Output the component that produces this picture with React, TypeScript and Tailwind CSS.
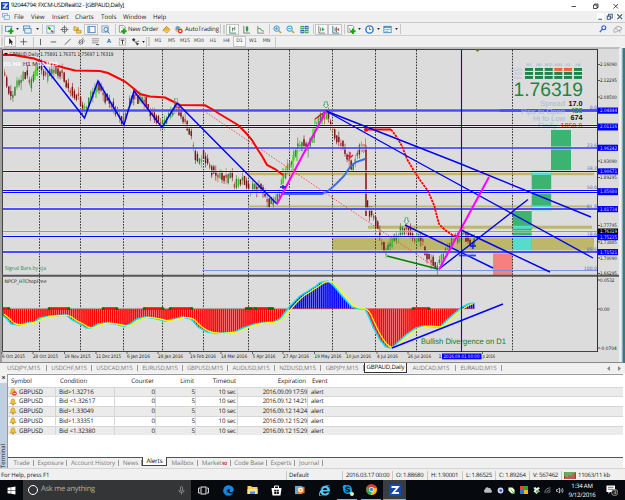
import { FaChrome, FaCloud, FaEdge, FaInternetExplorer, FaSkype, FaWindows } from "react-icons/fa";
import type { ReactNode } from "react";

type Point = [number, number];

const toPoints = (list: Point[]) => list.map((p) => p.join(",")).join(" ");

const valueAt = (list: Point[], x: number) => {
  for (let i = 1; i < list.length; i++) {
    const [x0, y0] = list[i - 1];
    const [x1, y1] = list[i];
    if (x <= x1) return x1 === x0 ? y1 : y0 + ((y1 - y0) * (x - x0)) / (x1 - x0);
  }
  return list[list.length - 1][1];
};

const price: Point[] = [
  [3, 73], [6, 82], [10, 95], [12, 97], [15, 87], [20, 80], [26, 73], [29, 83], [32, 82], [36, 68],
  [40, 64], [44, 74], [48, 76], [53, 70], [57, 72], [62, 73], [66, 83], [70, 92], [75, 96], [78, 96],
  [82, 107], [85, 112], [89, 97], [94, 92], [98, 85], [103, 95], [108, 100], [114, 109], [119, 117],
  [123, 122], [128, 106], [134, 93], [138, 100], [144, 100], [150, 113], [154, 115], [158, 120],
  [162, 127], [167, 118], [172, 110], [177, 106], [182, 118], [188, 129], [190, 132], [193, 149],
  [196, 158], [199, 161], [203, 155], [208, 165], [212, 171], [218, 175], [222, 176], [228, 178],
  [232, 175], [234, 187], [240, 180], [245, 180], [250, 192], [254, 188], [262, 188], [266, 200],
  [272, 202], [276, 200], [279, 192], [282, 178], [286, 170], [291, 161], [297, 148], [303, 144],
  [308, 148], [313, 135], [318, 120], [323, 117], [328, 115], [332, 130], [338, 140], [344, 150],
  [350, 165], [354, 165], [358, 148], [365, 148], [367, 210], [370, 213], [375, 220], [379, 232],
  [382, 245], [386, 252], [391, 242], [396, 237], [400, 232], [405, 228], [410, 234], [415, 240],
  [421, 236], [424, 250], [430, 260], [436, 268], [440, 260], [446, 250], [452, 240], [458, 238],
  [463, 232], [468, 240], [472, 246], [475, 235],
];

const slowAverage: Point[] = [
  [3, 55], [14, 55], [22, 56.5], [34, 58.5], [40, 61], [50, 64], [58, 66], [65, 68], [75, 70.5],
  [100, 71], [108, 73], [116, 77], [125, 81.5], [133, 88], [140, 94], [150, 96.5], [165, 97.5],
  [172, 101], [180, 105], [205, 105.3], [212, 109], [218, 113], [228, 119], [238, 125], [246, 133],
  [252, 140], [258, 150], [262, 156], [267, 165], [275, 169], [283, 175],
];

const fastAverage: Point[] = [
  [365, 129.5], [391, 129.5], [396, 136], [402, 146], [407, 159], [414, 171], [420, 180], [428, 191],
  [434, 205], [439, 224], [445, 230], [452, 235], [460, 237],
];

const support: Point[] = [
  [281, 194], [322, 194], [328, 191], [336, 184], [344, 176], [350, 167], [356, 162], [365, 159],
];

const zigzag: Point[] = [
  [40, 61], [84.5, 118], [98, 81], [124, 125], [134, 91], [162, 127.5], [177, 103], [277, 204],
];

const oscillator: Point[] = [
  [3, 316], [7, 319], [11, 324], [20, 325], [27, 323], [34, 322], [40, 318], [50, 316], [66, 315],
  [72, 320], [80, 324], [86, 328], [91, 328], [98, 324], [106, 323], [115, 324], [125, 326.5],
  [130, 324], [137, 319], [145, 317], [155, 318.5], [165, 321], [175, 319], [182, 317], [191, 319],
  [198, 327], [207, 332], [218, 333.5], [235, 332], [243, 328], [255, 324], [266, 322.5], [274, 322],
  [280, 319], [287, 310], [290, 306], [300, 296], [308, 291], [316, 286], [320, 282.5], [328, 281],
  [334, 286], [343, 297], [352, 307], [358, 308.5], [365, 309], [368, 315], [373, 327], [380, 340],
  [386, 347], [392, 348], [398, 342], [407, 334], [416, 328], [424, 326], [440, 327], [447, 320],
  [455, 313], [462, 307], [468, 304], [474, 303],
];

const ZERO = 309;
const bars = Array.from({ length: 230 }, (_, i) => 4 + i * 2.05);
const signal: Point[] = bars.map((x) => [
  x,
  (valueAt(oscillator, x - 1) + valueAt(oscillator, x - 3) + valueAt(oscillator, x - 6)) / 3,
]);

const verticals = [39.5, 80.5, 123.5, 162.5, 203.5, 248.5, 289.5, 332.5, 375.5, 416.5, 512.5];

const levels = [
  { y: 110.5, w: 2.4, color: "#4a4aff" },
  { y: 125.5, w: 1, color: "#0000ff" },
  { y: 127.5, w: 1, color: "#0000ff" },
  { y: 148, w: 1.5, color: "#3333ff" },
  { y: 171.5, w: 1, color: "#0000ff" },
  { y: 190.5, w: 1, color: "#0000ff" },
  { y: 192.5, w: 1, color: "#0000ff" },
  { y: 209, w: 2, color: "#5050fa" },
  { y: 231.5, w: 0.9, color: "#8d9d45" },
  { y: 236.5, w: 1, color: "#0000ff" },
  { y: 251.9, w: 2, color: "#4a4aff" },
];

const axis: [string, number][] = [
  ["2.16090", 64.5], ["2.12295", 80.5], ["2.08500", 97], ["1.93090", 161],
  ["1.89295", 177.5], ["1.77795", 225.5], ["1.73885", 242], ["1.70090", 258], ["1.66295", 273.5],
  ["0.0532", 280], ["0.00", 309], ["-0.0704", 348],
];

const axisTags: [string, number][] = [
  ["2.04844", 110.5], ["2.01116", 126.5], ["1.96242", 147.7], ["1.90671", 171.3],
  ["1.85680", 191.2], ["1.81734", 209], ["1.75235", 237], ["1.71521", 252],
];

const fibs: [string, number][] = [
  ["0.0", 109], ["23.6", 147], ["38.2", 170], ["50.0", 189], ["61.8", 208], ["78.6", 235.5],
  ["88.6", 250.5], ["100.0", 269.5],
];

const dates: [string, number, number][] = [
  ["6 Oct 2015", 2, 23], ["28 Oct 2015", 33, 25], ["19 Nov 2015", 64.5, 26], ["11 Dec 2015", 96, 25],
  ["6 Jan 2016", 127, 23], ["28 Jan 2016", 158, 25], ["19 Feb 2016", 190, 26], ["14 Mar 2016", 221, 26],
  ["5 Apr 2016", 252.5, 23], ["27 Apr 2016", 283, 26], ["19 May 2016", 314.5, 27],
  ["10 Jun 2016", 346, 25], ["4 Jul 2016", 377, 21], ["26 Jul 2016", 408, 23], ["p 2016", 482.5, 12.5],
];

const markers: Point[] = [[3, 9], [49, 69], [103, 117], [144, 163], [170, 192], [246, 273], [413, 429]];

const panelColumns: [string, number][] = [
  ["M1", 525], ["M5", 535], ["M15", 544.7], ["M30", 554.3], ["H1", 564], ["H4", 574],
];

function Candles() {
  return (
    <g>
      {bars.map((x, i) => {
        const y = valueAt(price, x);
        const next = valueAt(price, x + 2);
        const noise = ((i * 37) % 11) - 5;
        const up = next + noise * 0.3 < y;
        const body = 1.5 + ((i * 7) % 4);
        const wick = 3.5 + ((i * 13) % 5);
        const color = up ? (i % 3 === 0 ? "#44b62d" : "#3c7f3a") : i % 4 === 0 ? "#b4503c" : "#7d1414";
        return (
          <g key={i} fill={color}>
            <rect x={x + 0.4} y={y - wick + noise * 0.6} width="0.6" height={wick * 2} />
            <rect x={x} y={y - body + noise * 0.4} width="1.4" height={body * 2} />
          </g>
        );
      })}
      <path d="M36 76V66M35 80V71M96 98V88" stroke="#33e011" strokeWidth="1.3" />
      <path d="M283 184V168M286 173V166M293 172V155M297 161V147M313 143V128M315 134V119M322 126V116M327 120V113" stroke="#33e011" strokeWidth="1.2" />
      <path d="M366 146V216" stroke="#8b1c1c" strokeWidth="1.6" />
      <path d="M361 144h4v8h-4z" fill="#cc9999" />
    </g>
  );
}

function Arrow({ x, y }: { x: number; y: number }) {
  return (
    <path
      transform={`translate(${x} ${y})`}
      d="M-1.3 -3.2H1.3V0H2.7L0 3L-2.7 0H-1.3Z"
      fill="#e8eee8"
      stroke="#2e8b57"
      strokeWidth="0.7"
    />
  );
}

function Chart() {
  return (
    <svg viewBox="0 47 625 316" className="block h-[316px] w-[625px]" fill="none">
      <rect x="0" y="47" width="625" height="316" fill="#f0f0f0" />
      <path d="M0 48H619V362H0" fill="#dcdcdc" />
      <path d="M0 48H620" stroke="#b0b0b0" strokeWidth="1.4" />
      <path d="M1 48V362" stroke="#858585" strokeWidth="1.4" />
      <path d="M597.5 49.5H2.5V351.5H597.5" stroke="#444" />
      <rect x="619" y="48" width="2" height="315" fill="#efefef" />
      <rect x="621" y="48" width="1.5" height="315" fill="#b9e4f3" />
      <rect x="622.5" y="48" width="2.5" height="315" fill="#43747c" />

      <g fill="#bdb76b">
        <rect x="249" y="172.2" width="345" height="3" />
        <rect x="249" y="205.5" width="342" height="2.8" />
        <rect x="368" y="225.7" width="224" height="3" />
        <rect x="332.5" y="237" width="261.5" height="14.5" />
      </g>

      <g fill="#3cb371">
        <rect x="551" y="130" width="20" height="40.5" />
        <rect x="531.7" y="170.5" width="19.5" height="40.5" />
        <rect x="512.7" y="211" width="19" height="41" />
      </g>
      <g fill="#57dccb">
        <rect x="531.7" y="172" width="19.5" height="3" />
        <rect x="531.7" y="205.5" width="19.5" height="5.5" />
        <rect x="512.7" y="225.7" width="19" height="3" />
        <rect x="512.7" y="237" width="19" height="15" />
      </g>
      <rect x="493" y="252.5" width="19.5" height="23" fill="#f58080" />

      {verticals.map((x) => (
        <path key={x} d={`M${x} 50V351`} stroke="#333" strokeDasharray="1.6 1.3" />
      ))}

      <Candles />

      {levels.map((l) => (
        <g key={l.y}>
          <path d={`M3 ${l.y}H597`} stroke="#f2f2f2" strokeWidth={l.w + 1.8} opacity="0.5" />
          <path d={`M3 ${l.y}H597`} stroke={l.color} strokeWidth={l.w} />
        </g>
      ))}
      <path d="M202 270.5H597" stroke="#6c8ce6" strokeWidth="0.9" />
      <path d="M204 111L438 269" stroke="#ff3030" strokeWidth="0.8" strokeDasharray="1.5 1.5" />

      <polyline points={toPoints(slowAverage)} stroke="#ff0000" strokeWidth="2" />
      <polyline points={toPoints(fastAverage.slice(0, 2))} stroke="#ff0000" strokeWidth="2" />
      <polyline points={toPoints(fastAverage.slice(1))} stroke="#ff0000" strokeWidth="1.8" strokeDasharray="2.6 0.8" />
      <circle cx="366" cy="129.7" r="2" fill="#ff0000" />
      <path d="M315 119L326 111" stroke="#e01010" strokeWidth="1.3" />
      <polyline points={toPoints(support)} stroke="#3d6be8" strokeWidth="1.9" />
      <polyline points={toPoints(zigzag)} stroke="#0000ff" strokeWidth="1.5" />
      <path d="M387 256L438 269" stroke="#008000" strokeWidth="1.6" />
      <g stroke="#0000f5" strokeWidth="1.4">
        <path d="M326 111L461 164L591 217" />
        <path d="M326 111L414 160L593 258" />
        <path d="M405 225L493 268" />
        <path d="M461 230L550 272" />
        <path d="M439 269L528 199.5" />
      </g>
      <path d="M277 204L326 111M439 269.5L489 177" stroke="#ff00ff" strokeWidth="2" />
      <path d="M459 255.5H476" stroke="#2d50e8" strokeWidth="1.8" />
      <path d="M470 246H476M473 243V249M280 187H286M283 185V189" stroke="#1111ee" strokeWidth="1.3" />
      <path d="M350 152V158M348 155L350 158L353 155" stroke="#d02040" strokeWidth="1.3" />
      <Arrow x={326} y={105} />
      <Arrow x={406.5} y={221} />
      <rect x="174.5" y="98.5" width="3" height="4" stroke="#789878" strokeWidth="0.6" />
      <path d="M475 49.5H480L477.5 52Z" fill="#7d7420" />

      <g fontFamily="Liberation Sans, sans-serif" fontSize="5.5">
        <path d="M4 53h4l-2 2.3z" fill="#111" />
        <text x="9.5" y="55.6" fill="#222" fontFamily="DejaVu Sans, sans-serif" fontSize="5" textLength="104" lengthAdjust="spacingAndGlyphs">
          GBPAUD,Daily{"  "}1.75891 1.76371 1.75697 1.76319
        </text>
        <text x="3.5" y="66" fill="#fff" fontSize="6" fontWeight="bold">D1 H4</text>
        <text x="23" y="66" fill="#222" fontSize="6">H1 M</text>
        <text x="38" y="66" fill="#fff" fontSize="6" fontWeight="bold">30 M15</text>
        <text x="5" y="270" fill="#2e8b57" fontFamily="Open Sans, sans-serif" fontSize="5.6" textLength="41" lengthAdjust="spacingAndGlyphs">Signal Bars by cja</text>
      </g>

      <g fontFamily="Liberation Sans, sans-serif">
        {panelColumns.map(([name, x], i) => (
          <g key={name}>
            <text x={x + 4} y="66" fontSize="4" fill="#94abd0" textAnchor="middle">{name}</text>
            {[68, 72, 76].map((y) => (
              <rect key={y} x={x} y={y} width="8" height="2.9" fill={y === 68 && (i === 3 || i === 4) ? "#ff5a36" : "#1e8449"} />
            ))}
          </g>
        ))}
        <g fontSize="3.8" fill="#a5bbdc" textAnchor="end">
          <text x="522" y="71">MACD</text>
          <text x="522" y="75">STR</text>
          <text x="522" y="79">EMA</text>
        </g>
        <text x="513.5" y="95.5" fontSize="19.5" fill="#1e8449" textLength="69.5" lengthAdjust="spacingAndGlyphs">1.76319</text>
      </g>
      <path d="M500 110.5H597" stroke="#4a4aff" strokeWidth="2.4" />
      <g fontFamily="Liberation Sans, sans-serif">
        <g fontSize="7.6" fill="#a5bbdc">
          <text x="540" y="106" textLength="25" lengthAdjust="spacingAndGlyphs">Spread</text>
          <text x="521" y="113.5" textLength="44" lengthAdjust="spacingAndGlyphs">Pips to Open</text>
          <text x="533" y="120.7" textLength="32" lengthAdjust="spacingAndGlyphs">Hi to Low</text>
          <text x="538" y="127.7" textLength="19" lengthAdjust="spacingAndGlyphs">Daily</text>
        </g>
        <g fontSize="7.2" textAnchor="end" fontWeight="bold">
          <text x="582.5" y="105.5" fill="#111">17.0</text>
          <text x="582.5" y="113" fill="#2e8b57">428</text>
          <text x="582.5" y="120.3" fill="#111">674</text>
          <text x="582.5" y="127.5" fill="#ff5a36">1850.0</text>
        </g>
      </g>
      <path d="M500 125.5H597M500 127.5H597" stroke="#0000ff" />
      <g fontFamily="DejaVu Sans, sans-serif" fontSize="4.6" fill="#5672cf" textAnchor="end">
        {fibs.map(([label, y]) => (
          <text key={label} x="597" y={y}>{label}</text>
        ))}
      </g>

      {/* oscillator pane */}
      <path d="M2 275.7H619" stroke="#555" strokeWidth="2" />
      <g>
        {bars.map((x) => {
          const y = valueAt(oscillator, x);
          return (
            <g key={x}>
              <rect x={x - 1} y={Math.min(y, ZERO)} width="2.05" height={Math.abs(y - ZERO)} fill={y < ZERO ? "#8989ee" : "#f78f8f"} />
              <rect x={x - 0.7} y={Math.min(y, ZERO)} width="1.5" height={Math.abs(y - ZERO)} fill={y < ZERO ? "#0000ff" : "#ff0000"} />
            </g>
          );
        })}
        <path d={`M3 ${ZERO - 0.3}H474`} stroke="#e04040" strokeWidth="0.8" />
        <path d="M3 308.2H287" stroke="#9adada" strokeWidth="0.6" />
        <polyline points={toPoints(oscillator)} stroke="#00e8ff" strokeWidth="1.4" />
        <polyline points={toPoints(signal)} stroke="#ffff00" strokeWidth="1.2" />
        {markers.map(([from, to]) => (
          <g key={from}>
            <path d={`M${from} 308.5H${to}`} stroke="#f01010" strokeWidth="2.6" />
            <circle cx={to} cy="308.7" r="1.4" fill="#007000" />
            {from > 3 && <circle cx={from} cy="308.7" r="1.4" fill="#007000" />}
          </g>
        ))}
        <path d="M247 308.7H252M254 308.7H257M268 308.7H272" stroke="#007000" strokeWidth="2.4" />
        <path d="M392 348L503 304" stroke="#0000ff" strokeWidth="1.5" />
        <text x="421" y="344" fontFamily="Liberation Sans, sans-serif" fontSize="7.9" fill="#148014" textLength="85" lengthAdjust="spacingAndGlyphs">Bullish Divergence on D1</text>
        <text x="4.5" y="283" fontFamily="DejaVu Sans, sans-serif" fontSize="4.9" fill="#222" textLength="42" lengthAdjust="spacingAndGlyphs">NPCP_HTChopFree</text>
      </g>
      <path d="M461.5 50V352" stroke="#0000ff" strokeWidth="1.1" />

      {/* scales */}
      <path d="M597.5 49V352" stroke="#333" />
      <g fontFamily="DejaVu Sans, sans-serif" fontSize="4.8" fill="#222">
        {axis.map(([label, y]) => (
          <g key={label}>
            <path d={`M598 ${y}H600`} stroke="#333" strokeWidth="0.8" />
            <text x="600" y={y + 1.7} textLength={label.length * 2.4} lengthAdjust="spacingAndGlyphs">{label}</text>
          </g>
        ))}
        <rect x="598" y="228.5" width="20" height="5.6" fill="#000" />
        <text x="600" y="233.2" fill="#fff" textLength="17" lengthAdjust="spacingAndGlyphs">1.76319</text>
        {axisTags.map(([label, y]) => (
          <g key={label}>
            <rect x="598" y={y - 3} width="20" height={label === "2.01116" || label === "1.85680" ? 7 : 6.2} fill="#0000ff" />
            <text x="600" y={y + 1.8} fill="#d5d5ff" textLength="17" lengthAdjust="spacingAndGlyphs">{label}</text>
          </g>
        ))}
        {dates.map(([label, x, width]) => (
          <g key={label}>
            <path d={`M${x} 352V354`} stroke="#333" strokeWidth="0.7" />
            <text x={x} y="358.2" textLength={width} lengthAdjust="spacingAndGlyphs">{label}</text>
          </g>
        ))}
        <text x="438.5" y="358.2">1</text>
        <rect x="442" y="353.5" width="39.5" height="5.8" fill="#0000ff" />
        <text x="443.5" y="358" fill="#d5d5ff" textLength="36" lengthAdjust="spacingAndGlyphs">2016.09.01 00:00</text>
      </g>
      <path d="M0 362.5H622" stroke="#888" />
    </svg>
  );
}

function Cell({ w, active, children }: { w: string; active?: boolean; children?: ReactNode }) {
  return (
    <div className={`flex h-[11px] shrink-0 items-center justify-center ${w} ${active ? "border border-[#c4c4c4] bg-[#f8f8f8]" : ""}`}>
      {children}
    </div>
  );
}

function Icon({ children }: { children: ReactNode }) {
  return (
    <svg viewBox="0 0 10 10" className="size-[9px] shrink-0" fill="none">
      {children}
    </svg>
  );
}

function Drop() {
  return (
    <Cell w="w-[5px]">
      <svg viewBox="0 0 4 3" className="h-[2px] w-[3px]"><path d="M0 0H4L2 3Z" fill="#222" /></svg>
    </Cell>
  );
}

const Grip = () => <Cell w="w-[4px]"><div className="h-[9px] w-[2px] border-x border-[#cfcfcf]" /></Cell>;
const Line = ({ w }: { w: string }) => <Cell w={w}><div className="h-[10px] w-px bg-[#c8c8c8]" /></Cell>;

const plus = <path d="M6.5 4V10M3.5 7H9.5" stroke="#12a812" strokeWidth="2.2" />;

function MainToolbar() {
  return (
    <div className="flex h-[13px] items-center border-t border-[#c9c9c9] bg-[#f0f0f0] text-[6.1px]">
      <Grip />
      <Cell w="w-[11px]"><Icon><rect x="0.5" y="1.5" width="7" height="5.5" fill="#e9f5fc" stroke="#5593b5" />{plus}</Icon></Cell>
      <Drop />
      <Cell w="w-[15px]"><Icon><rect x="0.5" y="1" width="7" height="5" fill="#cfe5f5" stroke="#5a93bd" /><rect x="2" y="4" width="7" height="5" fill="#e5f2fa" stroke="#5a93bd" /></Icon></Cell>
      <Drop />
      <Line w="w-[4px]" />
      <Cell w="w-[13px]"><Icon><rect x="1" y="1" width="8" height="8" fill="#f4fbff" stroke="#6aaed6" /><path d="M2.5 2.5L5 5" stroke="#11a022" strokeWidth="2" /><path d="M5.5 6L8 8" stroke="#e04428" strokeWidth="2" /></Icon></Cell>
      <Cell w="w-[14px]"><Icon><circle cx="5" cy="5" r="2.8" stroke="#555" strokeWidth="0.8" /><path d="M5 .5V9.5M.5 5H9.5" stroke="#555" strokeWidth="0.8" /></Icon></Cell>
      <Cell w="w-[13px]"><Icon><path d="M1 2H3L4 3H6V6H1ZM4 5H6L7 6H9V9H4Z" fill="#f7cf55" stroke="#b98c22" strokeWidth="0.8" /></Icon></Cell>
      <Cell w="w-[14px]" active><Icon><rect x="1" y="1.5" width="8" height="7" fill="#fff" stroke="#457fb8" /><rect x="1.5" y="2" width="2" height="6" fill="#6ea8da" /></Icon></Cell>
      <Cell w="w-[14px]"><Icon><path d="M1 1H8V8H1Z" fill="#e5f0f8" stroke="#7da5c4" /><circle cx="5.5" cy="5" r="2.3" fill="#d8f0ff" stroke="#557b9b" /><path d="M7 7L9.5 9.5" stroke="#557b9b" /></Icon></Cell>
      <Line w="w-[6px]" />
      <Cell w="w-[9px]"><Icon><path d="M1.5 .5H6L8 2.5V8H1.5Z" fill="#fff" stroke="#777" strokeWidth="0.8" /><path d="M3 3H6" stroke="#999" strokeWidth="0.7" />{plus}</Icon></Cell>
      <div className="w-[33px] pl-px tracking-[-0.1px] whitespace-nowrap">New Order</div>
      <Cell w="w-[12px]"><Icon><path d="M1 6L5 1.5L9 5.5L5.5 9Z" fill="#f2b62b" stroke="#a87717" strokeWidth="0.8" /><path d="M1.5 6.5L5.5 8.2L9 5.5" stroke="#fff" strokeWidth="0.6" /></Icon></Cell>
      <Cell w="w-[13px]"><Icon><path d="M.5 5L4.5 1L9 4L6 8H3Z" fill="#efc246" /><circle cx="4" cy="3.4" r="2.4" fill="#54a7de" /><circle cx="7" cy="6.8" r="2.7" fill="#dd3322" /><rect x="6" y="5.8" width="2" height="2" fill="#fff" /></Icon></Cell>
      <div className="w-[34px] tracking-[-0.1px] whitespace-nowrap">AutoTrading</div>
      <Line w="w-[3px]" />
      <Grip />
      <Cell w="w-[13px]" active><Icon><path d="M2 1V9H9M5 3V7M5 4H7M7.5 2V6" stroke="#367c4b" strokeWidth="0.9" /></Icon></Cell>
      <Cell w="w-[14px]"><Icon><path d="M2 1V9H9M5.5 1V8" stroke="#555" strokeWidth="0.8" /><rect x="4.3" y="2" width="2.6" height="4.5" fill="#15a82b" /></Icon></Cell>
      <Cell w="w-[14px]"><Icon><path d="M2 1V9H9" stroke="#666" strokeWidth="0.8" /><path d="M2 4L5 4L6 6L9 7" stroke="#28a544" /></Icon></Cell>
      <Line w="w-[4px]" />
      <Cell w="w-[12px]"><Icon><circle cx="4" cy="4" r="3" fill="#d9effc" stroke="#2887c9" /><path d="M4 2.5V5.5M2.5 4H5.5" stroke="#2887c9" strokeWidth="0.8" /><path d="M6.5 6.5L9 9" stroke="#d09a22" strokeWidth="1.6" /></Icon></Cell>
      <Cell w="w-[14px]"><Icon><circle cx="4" cy="4" r="3" fill="#d9effc" stroke="#2887c9" /><path d="M2.5 4H5.5" stroke="#2887c9" strokeWidth="0.8" /><path d="M6.5 6.5L9 9" stroke="#d09a22" strokeWidth="1.6" /></Icon></Cell>
      <Cell w="w-[14px]"><Icon><rect x="0.5" y="1" width="4.2" height="3.8" fill="#3aa846" /><rect x="5.3" y="1" width="4.2" height="3.8" fill="#2d66bd" /><rect x="0.5" y="5.4" width="4.2" height="3.8" fill="#2d66bd" /><rect x="5.3" y="5.4" width="4.2" height="3.8" fill="#3aa846" /><path d="M1.2 3h3M6 3h3M1.2 7.4h3M6 7.4h3" stroke="#fff" strokeWidth="0.8" /></Icon></Cell>
      <Line w="w-[4px]" />
      <Cell w="w-[13px]" active><Icon><path d="M2 1V9H9M4 3V7" stroke="#555" strokeWidth="0.8" /><path d="M5.5 2.5L8.5 5L5.5 7Z" fill="#15b42d" /></Icon></Cell>
      <Cell w="w-[14px]" active><Icon><path d="M2 1V9H9M4.5 3V7" stroke="#367088" /><path d="M6 2V8" stroke="#333" strokeWidth="0.8" /><path d="M9 3L6.5 5L9 7Z" fill="#d94e28" /></Icon></Cell>
      <Line w="w-[4px]" />
      <Cell w="w-[11px]"><Icon><path d="M1 .5H6L7.5 2V8H1Z" fill="#fff" stroke="#777" strokeWidth="0.8" /><path d="M3 6V4L4 3" stroke="#555" strokeWidth="0.7" />{plus}</Icon></Cell>
      <Drop />
      <Cell w="w-[14px]"><Icon><circle cx="5" cy="5" r="4" fill="#fff" stroke="#2676c8" strokeWidth="1.6" /><path d="M5 2.5V5H7" stroke="#333" strokeWidth="0.8" /></Icon></Cell>
      <Drop />
      <Cell w="w-[13px]"><Icon><rect x="1" y="1.5" width="8" height="7" fill="#eff8ff" stroke="#4788bd" /><path d="M1 2.5H9" stroke="#4788bd" strokeWidth="1.4" /><path d="M2.5 5H7.5M2.5 7H6" stroke="#60a84b" strokeWidth="0.8" /></Icon></Cell>
      <Drop />
      <Line w="w-[3px]" />
      <div className="ml-auto flex">
        <Cell w="w-[12px]"><svg viewBox="0 0 10 10" className="size-[8px]" fill="none"><circle cx="6" cy="3.5" r="2.5" stroke="#2c5bd8" strokeWidth="1.3" /><path d="M4 5.5L1 9" stroke="#2c5bd8" strokeWidth="1.6" /></svg></Cell>
        <Cell w="w-[16px]"><Icon><ellipse cx="6" cy="4" rx="3.5" ry="2.3" stroke="#999" /><ellipse cx="3" cy="6" rx="2.5" ry="1.8" fill="#f0f0f0" stroke="#999" strokeWidth="0.8" /><path d="M7 6L8 8.5M2 8L1.5 9" stroke="#999" /></Icon></Cell>
      </div>
    </div>
  );
}

const periods: [string, string][] = [
  ["M1", "w-[14px]"], ["M5", "w-[13px]"], ["M15", "w-[14px]"], ["M30", "w-[14px]"],
  ["H1", "w-[14px]"], ["H4", "w-[13px]"], ["D1", "w-[13px]"], ["W1", "w-[14px]"], ["MN", "w-[13px]"],
];

function DrawToolbar() {
  return (
    <div className="flex h-[12px] items-center border-t border-[#cfcfcf] bg-[#f0f0f0]">
      <Grip />
      <Cell w="w-[12px]" active><Icon><path d="M3.5 1V8L5 6.5L6.5 9L7.3 8.5L6 6H8Z" fill="#222" /></Icon></Cell>
      <Cell w="w-[15px]"><Icon><path d="M5 1.5V9M1.5 5.3H9" stroke="#555" strokeWidth="0.9" /></Icon></Cell>
      <Line w="w-[4px]" />
      <Cell w="w-[11px]"><Icon><path d="M5 2V9" stroke="#444" strokeWidth="0.9" /></Icon></Cell>
      <Cell w="w-[15px]"><Icon><path d="M2 5.5H8" stroke="#444" strokeWidth="0.9" /></Icon></Cell>
      <Cell w="w-[13px]"><Icon><path d="M2 8.5L8.5 2" stroke="#444" strokeWidth="0.9" /></Icon></Cell>
      <Cell w="w-[14px]"><Icon><path d="M1 6.5L7 1M2 8L8 2.5M3.5 9L9 4M3 3V8M6 3V8" stroke="#555" strokeWidth="0.7" /></Icon></Cell>
      <Cell w="w-[14px]"><Icon><path d="M1 2H9M1 4.3H9M1 6.5H8" stroke="#666" strokeWidth="0.7" /><path d="M5.5 8.5H9" stroke="#444" /></Icon></Cell>
      <Cell w="w-[14px]"><span className="text-[6px] font-semibold text-[#444]">A</span></Cell>
      <Cell w="w-[13px]"><Icon><rect x="1.5" y="1.5" width="7" height="7.5" stroke="#777" strokeDasharray="1 .6" strokeWidth="0.8" /><path d="M3 3.5H7M5 3.5V8" stroke="#333" /></Icon></Cell>
      <Cell w="w-[12px]"><Icon><path d="M1 3L3 1L5 3L3 5Z" fill="#333" /><path d="M3 4L8 8M5 6L9 4.5" stroke="#444" strokeWidth="0.8" /><path d="M5 7H9L7 9.5Z" fill="#333" /></Icon></Cell>
      <Drop />
      <Line w="w-px" />
      <Grip />
      {periods.map(([name, w]) => (
        <Cell key={name} w={w} active={name === "D1"}>
          <span className="font-['DejaVu_Sans'] text-[4.8px] text-[#444]">{name}</span>
        </Cell>
      ))}
      <Line w="w-[4px]" />
    </div>
  );
}

const menu: [string, string][] = [
  ["File", "w-[17px]"], ["View", "w-[21px]"], ["Insert", "w-[23px]"], ["Charts", "w-[26px]"],
  ["Tools", "w-[22px]"], ["Window", "w-[30px]"], ["Help", "w-[20px]"],
];

const chartTabs: [string, string][] = [
  ["USDJPY,M15", "w-[46px]"], ["USDCHF,M15", "w-[45px]"], ["USDCAD,M15", "w-[46px]"],
  ["EURUSD,M15", "w-[45px]"], ["GBPUSD,M15", "w-[45px]"], ["AUDUSD,M15", "w-[47px]"],
  ["NZDUSD,M15", "w-[46px]"], ["GBPJPY,M15", "w-[43px]"], ["GBPAUD,Daily", "w-[43px]"],
  ["AUDCAD,M15", "w-[49px]"], ["EURAUD,M15", "w-[46px]"],
];

const alerts = [
  { condition: "Bid>1.32716", expiration: "2016.09.09 17:59" },
  { condition: "Bid <1.32617", expiration: "2016.09.12 14:21" },
  { condition: "Bid>1.33049", expiration: "2016.09.12 14:24" },
  { condition: "Bid>1.33351", expiration: "2016.09.12 15:29" },
  { condition: "Bid <1.32380", expiration: "2016.09.12 15:29" },
];

const terminalTabs: [string, string][] = [
  ["Trade", "w-[25px]"], ["Exposure", "w-[33px]"], ["Account History", "w-[52px]"], ["News", "w-[23px]"],
  ["Alerts", "w-[25px]"], ["Mailbox", "w-[31px]"], ["Market", "w-[33px]"], ["Code Base", "w-[36px]"],
  ["Experts", "w-[28px]"], ["Journal", "w-[28px]"],
];

const status: [string, string][] = [
  ["2016.03.17 00:00", "w-[50px]"], ["O: 1.88680", "w-[35px]"], ["H: 1.90001", "w-[35px]"],
  ["L: 1.86525", "w-[33px]"], ["C: 1.89264", "w-[34px]"], ["V: 567462", "w-[32px]"],
];

const columns = "grid grid-cols-[48px_59px_41px_40px_42px_70px_1fr] items-center";

function Terminal() {
  return (
    <div className="flex h-[94px] bg-white text-[6.2px] tracking-[-0.1px] text-[#222]">
      <div className="flex w-[7px] shrink-0 flex-col items-center justify-between bg-[#bfcfe0]">
        <span className="w-full bg-[#f0f0f0] text-center text-[7px] leading-[9px] font-bold">×</span>
        <span className="rotate-180 text-[6px] leading-[7px] [writing-mode:vertical-rl]">Terminal</span>
      </div>
      <div className="mr-[2px] flex flex-1 flex-col border-t border-l border-[#999]">
        <div className={`h-[11.5px] ${columns}`}>
          <span className="pl-[3px]">Symbol</span>
          <span className="pl-1">Condition</span>
          <span className="pr-[2px] text-right">Counter</span>
          <span className="pr-[2px] text-right">Limit</span>
          <span className="pr-[2px] text-right">Timeout</span>
          <span className="pr-[2px] text-right">Expiration</span>
          <span className="pl-[4px]">Event</span>
        </div>
        {alerts.map((a, i) => (
          <div key={i} className={`h-[9.75px] border-t border-[#d6d6d6] leading-[8.5px] ${columns} ${i % 2 ? "bg-white" : "bg-[#ebebeb]"}`}>
            <span className="flex items-center gap-[2px] border-r border-[#d6d6d6] pl-px">
              <svg viewBox="0 0 9 9" className="size-[8px]">
                <path d="M1 6.5Q2.3 5.8 2.3 3.5Q2.5 1 4.5 .8Q6.5 1 6.5 3.5Q6.7 5.8 8 6.5Z" fill="#f6c431" stroke="#ab831f" strokeWidth="0.6" />
                <circle cx="4.5" cy="7.4" r="1" fill="#ab831f" />
                {i === 0 && <><circle cx="6.3" cy="6.2" r="2.5" fill="#e04838" /><path d="M4.8 6.2H7.8" stroke="#fff" strokeWidth="0.9" /></>}
              </svg>
              GBPUSD
            </span>
            <span className="border-r border-[#d6d6d6] pl-[3px]">{a.condition}</span>
            <span className="border-r border-[#d6d6d6] text-right">0</span>
            <span className="border-r border-[#d6d6d6] text-right">5</span>
            <span className="border-r border-[#d6d6d6] pr-px text-right">10 sec</span>
            <span className="border-r border-[#d6d6d6] text-right tracking-[-0.3px] whitespace-nowrap">{a.expiration}</span>
            <span className="pl-[3px]">alert</span>
          </div>
        ))}
        <div className="mt-auto flex h-[11px] border-t border-[#555] bg-[#f0f0f0] pl-px">
          {terminalTabs.map(([name, w]) => (
            <div
              key={name}
              className={`relative flex h-[9px] items-center justify-center whitespace-nowrap ${w} ${
                name === "Alerts"
                  ? "-mt-px border-x border-b border-[#444] bg-white text-black"
                  : "text-[#777] after:absolute after:right-0 after:h-[6px] after:w-px after:bg-[#999]"
              }`}
            >
              {name}
              {name === "Market" && <span className="mt-[4px] ml-[0.5px] text-[4.5px] leading-none font-bold text-[#e02020]">92</span>}
            </div>
          ))}
        </div>
      </div>
    </div>
  );
}

function Taskbar() {
  return (
    <div className="flex h-5 items-center bg-[#060a0e] text-white">
      <div className="flex w-[23px] justify-center"><FaWindows className="size-[9px]" /></div>
      <div className="flex h-5 w-[168px] items-center bg-[#333537] pl-[5px]">
        <div className="size-[10px] rounded-full border-[1.5px] border-white" />
        <span className="ml-[3px] text-[7.6px] tracking-[-0.3px] text-[#b0b0b0]">Ask me anything</span>
        <svg viewBox="0 0 8 10" className="mr-[6px] ml-auto h-[9px] w-[7px]" fill="none" stroke="#aaa" strokeWidth="0.8"><rect x="2.7" y="0.6" width="2.6" height="5" rx="1.3" /><path d="M1 4.5Q1 7.3 4 7.3Q7 7.3 7 4.5M4 7.3V9.5" /></svg>
      </div>
      <div className="flex w-[25px] justify-center">
        <svg viewBox="0 0 11 9" className="h-[9px] w-[11px]" fill="none" stroke="#fff" strokeWidth="0.9"><rect x="3" y="1" width="5" height="7" /><path d="M2 2H.6V7H2M9 2H10.4V7H9" /></svg>
      </div>
      <div className="flex w-6 justify-center"><FaEdge className="size-[11px] text-[#1688e0]" /></div>
      <div className="flex w-6 justify-center">
        <svg viewBox="0 0 11 10" className="h-[10px] w-[11px]"><path d="M.5 1H4L5 2H10.5V9H.5Z" fill="#f5cf5b" /><path d="M.5 4H10.5V9H.5Z" fill="#fbe38c" /><path d="M3 9V6.5H8V9" fill="#3a9be0" /></svg>
      </div>
      <div className="flex w-6 justify-center">
        <svg viewBox="0 0 11 11" className="size-[11px]"><path d="M3.5 3V1H7.5V3" stroke="#fff" fill="none" /><path d="M.5 3H10.5L9.5 10.5H1.5Z" fill="#fff" /><path d="M3.2 4.8H5.2V6.6H3.2ZM5.7 4.8H7.8V6.6H5.7ZM3.2 7.1H5.2V9H3.2ZM5.7 7.1H7.8V9H5.7Z" fill="#111" /></svg>
      </div>
      <div className="flex w-[23px] justify-center">
        <svg viewBox="0 0 11 10" className="h-[10px] w-[10px]"><rect x="0" y="0.5" width="8" height="9" fill="#55aee8" /><rect x="2" y="1.5" width="8.5" height="7" fill="#f07a24" /><circle cx="6" cy="5" r="2.7" fill="#fff" /><path d="M5.2 3.5L7.7 5L5.2 6.5Z" fill="#f07a24" /></svg>
      </div>
      <div className="flex w-[26px] justify-center"><FaInternetExplorer className="size-[11px] text-[#55c6f2]" /></div>
      <div className="relative flex h-5 w-[20px] items-center justify-center border-b border-[#76b9ed]">
        <FaSkype className="size-[11px] text-[#12a5e8]" />
        <span className="absolute right-[3px] bottom-[3px] size-[4px] rounded-full bg-[#d9f2b5]" />
      </div>
      <div className="relative ml-[4px] flex h-5 w-[20px] items-center justify-center border-b border-[#76b9ed]">
        <svg viewBox="0 0 12 12" className="size-[11px]"><circle cx="6" cy="6" r="6" fill="#e33b2e" /><path d="M6 6L.8 3Q-.8 7 2 10.5Q4 12 6 12Z" fill="#35a852" /><path d="M6 6L11.5 3.8Q12.8 8 10 10.5Q8 12 5.5 12Z" fill="#fbc116" /><circle cx="6" cy="6" r="2.7" fill="#fff" /><circle cx="6" cy="6" r="2" fill="#4285f4" /></svg>
      </div>
      <div className="ml-[2px] flex h-5 w-[23px] items-center justify-center border-b border-[#76b9ed] bg-[#3a3d40]">
        <svg viewBox="0 0 12 12" className="size-[12px]"><rect width="12" height="12" fill="#1348b5" /><path d="M2.5 3H9L4 9H10" stroke="#fff" strokeWidth="1.8" fill="none" /></svg>
      </div>
      <div className="ml-auto flex items-center">
        <div className="mr-[2px] flex w-[80px] items-center justify-between">
          <FaCloud className="size-[8px] text-[#bbb]" />
          <svg viewBox="0 0 8 8" className="size-[7px]"><circle cx="4" cy="4" r="3.3" fill="#cdd7ff" /><circle cx="4.3" cy="4" r="1.5" fill="#3346a8" /></svg>
          <svg viewBox="0 0 8 8" className="size-[7px]"><path d="M.5 .5H5L7.5 3V7.5H4L.5 4Z" fill="#e9ffd6" /><path d="M3 3L7 7" stroke="#46b32b" /></svg>
          <svg viewBox="0 0 8 8" className="size-[8px]"><rect width="4" height="4" fill="#e8452c" /><rect x="4" width="4" height="4" fill="#3f9b3a" /><rect y="4" width="4" height="4" fill="#2c77d4" /><rect x="4" y="4" width="4" height="4" fill="#f2b521" /></svg>
          <svg viewBox="0 0 8 8" className="size-[7px]"><path d="M.5 1L2.5 0L4 1.5L6 0L8 1.5L6 3L8 5L6 6L4 8L2 6L.5 5L2 3Z" fill="#e7f3e9" /><circle cx="5" cy="5" r="1.6" fill="#4db34a" /></svg>
          <svg viewBox="0 0 8 8" className="size-[7px]" fill="none" stroke="#aaa" strokeWidth="0.8"><path d="M1 7Q1 1 7.5 1M3 7Q3 3.2 7.5 3.2M5 7Q5.2 5.2 7.5 5.2" /></svg>
          <svg viewBox="0 0 9 8" className="h-[7px] w-[8px]" fill="none" stroke="#eee" strokeWidth="0.8"><path d="M.5 3H2L4 1V7L2 5H.5ZM5.5 2.5Q6.5 4 5.5 5.5M7 1.2Q9 4 7 6.8" /></svg>
        </div>
        <div className="w-[32px] text-center text-[6.1px] leading-[9px] tracking-[-0.2px] whitespace-nowrap">
          <div>1:34 AM</div>
          <div>9/12/2016</div>
        </div>
        <div className="flex w-[27px] items-center justify-center">
          <svg viewBox="0 0 12 11" className="h-[11px] w-[12px]"><path d="M.5 .5H9V7H4L2.5 9V7H.5Z" fill="#fff" /><path d="M2 2.3H7.5M2 4.3H7.5" stroke="#333" strokeWidth="0.7" /><circle cx="8.7" cy="7.5" r="3.2" fill="#222" stroke="#ddd" strokeWidth="0.5" /><text x="7.4" y="9.4" fontSize="5" fill="#fff">3</text></svg>
        </div>
      </div>
    </div>
  );
}

export default function App() {
  return (
    <div className="flex h-[500px] w-[625px] flex-col overflow-hidden bg-[#f0f0f0] font-['Open_Sans',sans-serif] text-[6px] text-[#222] [text-rendering:geometricPrecision]">
      <div className="flex h-[11px] items-center bg-white">
        <svg viewBox="0 0 8 8" className="ml-px size-[8px]"><rect width="8" height="8" fill="#1348b5" /><path d="M1.5 2H6L2.5 6H6.8" stroke="#fff" strokeWidth="1.2" fill="none" /></svg>
        <span className="ml-[2px] text-[6px] tracking-[-0.36px] whitespace-nowrap text-black">92044794: FXCM-USDReal02 - [GBPAUD,Daily]</span>
        <svg viewBox="0 0 52 8" className="mr-[4px] ml-auto h-[8px] w-[52px]" fill="none" stroke="#222" strokeWidth="0.8"><path d="M2.5 4.5H7M44.5 2L49 6.5M49 2L44.5 6.5M24.5 3H28V6.5H24.5ZM25.5 3V2H29V5.5H28" /></svg>
      </div>
      <div className="flex h-[11px] items-center text-[6.2px]">
        <svg viewBox="0 0 9 8" className="ml-[2px] h-[7px] w-[8px]" fill="#e3f1fb" stroke="#6ba3cf" strokeWidth="0.8"><rect x="0.5" y="0.5" width="5.5" height="4" /><rect x="2.5" y="3" width="6" height="4.3" /></svg>
        <div className="ml-[4px] flex">
          {menu.map(([name, w]) => <span key={name} className={w}>{name}</span>)}
        </div>
        <div className="mr-[2px] ml-auto flex gap-[2px]">
          {["M1 5H4", "M1 2.5H3.5V5H1ZM2 2.5V1H5V4H3.5", "M1 1L5 5M5 1L1 5"].map((d) => (
            <svg key={d} viewBox="0 0 6 6" className="size-[7.5px] bg-white" fill="none"><path d={d} stroke="#46637f" strokeWidth="0.9" /></svg>
          ))}
        </div>
      </div>
      <MainToolbar />
      <DrawToolbar />
      <Chart />
      <div className="flex h-[10px] shrink-0 items-center pl-px text-[6px] tracking-[-0.15px] text-[#777]">
        {chartTabs.map(([name, w]) => (
          <div
            key={name}
            className={`flex items-center justify-center whitespace-nowrap ${w} ${
              name === "GBPAUD,Daily"
                ? "h-[10px] border-x border-b border-[#333] bg-white text-black"
                : "h-[6px] border-r border-[#999]"
            }`}
          >
            {name}
          </div>
        ))}
        <svg viewBox="0 0 16 5" className="mr-[2px] ml-auto h-[5px] w-[16px]" fill="#888"><path d="M3 0V5L0 2.5ZM11 0V5L14 2.5Z" /></svg>
      </div>
      <div className="h-px shrink-0 bg-[#f6f6f6]" />
      <Terminal />
      <div className="flex h-[12px] items-center border-t border-[#d5d5d5] pt-[2px] text-[6px] tracking-[-0.25px] whitespace-nowrap">
        <span className="w-[286px] pl-px tracking-[-0.1px]">For Help, press F1</span>
        <span className="flex h-[9px] w-[56px] items-center border-l border-[#c8c8c8] pl-[2px] tracking-[-0.1px]">Default</span>
        {status.map(([label, w]) => (
          <span key={label} className={`flex h-[9px] items-center border-l border-[#c8c8c8] pl-[3px] ${w}`}>{label}</span>
        ))}
        <span className="flex h-[9px] items-center gap-[2px] border-l border-[#c8c8c8] pl-[2px]">
          <svg viewBox="0 0 12 7" className="h-[7px] w-[12px]"><rect width="12" height="7" fill="#4c9a3d" /><path d="M0 7V4H2V5H4V3H6V4H8V2H10V1H12V7Z" fill="#b03a30" /><path d="M2 0V7M4 0V7M6 0V7M8 0V7M10 0V7" stroke="#eee" strokeWidth="0.4" /></svg>
          11063/11 kb
        </span>
      </div>
      <Taskbar />
    </div>
  );
}
